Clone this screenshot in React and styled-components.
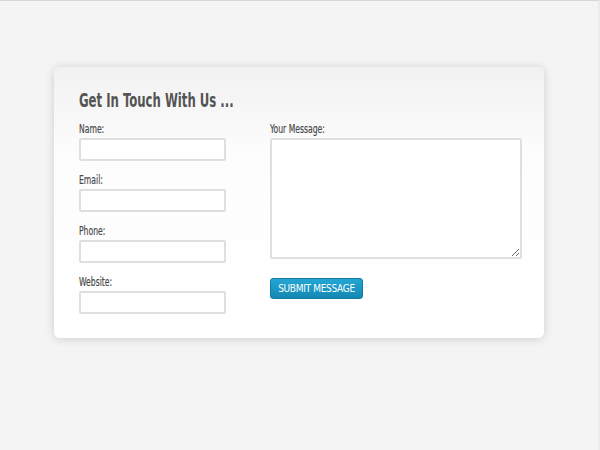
import styled, { createGlobalStyle } from "styled-components";

const Global = createGlobalStyle`
  html, body {
    margin: 0;
    padding: 0;
    background: #f4f4f4;
  }
`;

const condensed = `"DejaVu Sans Condensed", "DejaVu Sans", sans-serif`;

const Page = styled.div`
  box-sizing: border-box;
  width: 600px;
  height: 450px;
  border-top: 1px solid #d6d6d6;
  border-right: 2px solid #ebebeb;
  padding: 66px 0 0 54px;
  background: #f4f4f4;
`;

const Card = styled.form`
  box-sizing: border-box;
  width: 490px;
  height: 271px;
  padding: 20px 25px 0 25px;
  border-radius: 6px;
  background: linear-gradient(to bottom, #f1f1f1 0px, #fdfdfd 90px, #ffffff 100%);
  box-shadow: 0 1px 10px rgba(0, 0, 0, 0.16);
  display: flex;
  flex-direction: column;
`;

// the original face is a very narrow display font, so squeeze DejaVu horizontally
const Title = styled.h2`
  margin: 0 0 9px 0;
  font-family: ${condensed};
  font-weight: bold;
  font-size: 20px;
  line-height: 26px;
  color: #545454;
  white-space: nowrap;
  transform: scaleX(0.65);
  transform-origin: left center;
`;

const Columns = styled.div`
  display: flex;
  gap: 44px;
`;

const Column = styled.div`
  display: flex;
  flex-direction: column;
  gap: ${(p) => p.gap || 0}px;
`;

const Field = styled.div`
  display: flex;
  flex-direction: column;
`;

const Label = styled.label`
  font-family: ${condensed};
  font-size: 12px;
  line-height: 14px;
  color: #4a4a4a;
  margin-bottom: 2px;
  white-space: nowrap;
  transform: scaleX(0.71);
  transform-origin: left center;
  -webkit-text-stroke: 0.2px #4a4a4a;
`;

const Input = styled.input`
  box-sizing: border-box;
  width: 147px;
  height: 23px;
  border: 2px solid #dfdfdf;
  border-radius: 2px;
  background: #fff;
  outline: none;
`;

const TextArea = styled.textarea`
  box-sizing: border-box;
  width: 252px;
  height: 121px;
  border: 2px solid #dfdfdf;
  border-radius: 2px;
  background: #fff;
  outline: none;
  resize: both;
`;

const Button = styled.button`
  align-self: flex-start;
  margin-top: 19px;
  height: 21px;
  width: 93px;
  padding: 0;
  border: 1px solid #137aa0;
  border-radius: 3px;
  background: linear-gradient(to bottom, #23a6d4, #1488b3);
  color: #fff;
  font-family: ${condensed};
  font-size: 10px;
  letter-spacing: -0.3px;
`;

const fields = ["Name:", "Email:", "Phone:", "Website:"];

export default function App() {
  return (
    <>
      <Global />
      <Page>
        <Card onSubmit={(e) => e.preventDefault()}>
          <Title>Get In Touch With Us ...</Title>
          <Columns>
            <Column gap={12}>
              {fields.map((f) => (
                <Field key={f}>
                  <Label>{f}</Label>
                  <Input type="text" />
                </Field>
              ))}
            </Column>
            <Column>
              <Field>
                <Label>Your Message:</Label>
                <TextArea />
              </Field>
              <Button type="submit">SUBMIT MESSAGE</Button>
            </Column>
          </Columns>
        </Card>
      </Page>
    </>
  );
}
